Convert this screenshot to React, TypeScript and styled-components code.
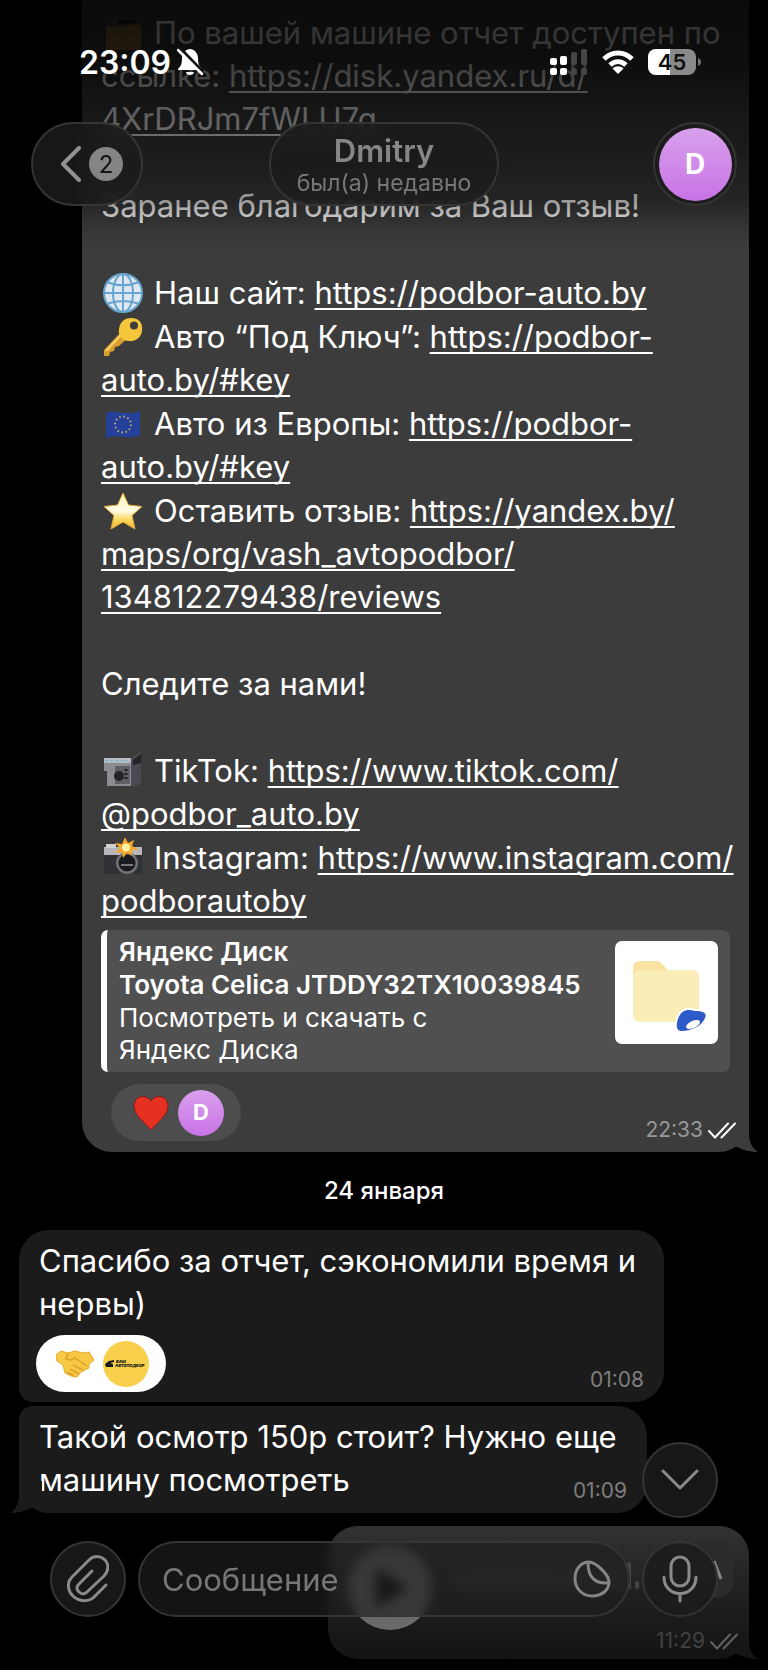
import React from 'react';
import styled, { createGlobalStyle, css } from 'styled-components';

const Global = createGlobalStyle`
  * { box-sizing: border-box; }
  html, body { margin: 0; background: #000; }
  body { font-family: Inter, "Noto Sans", "Liberation Sans", sans-serif; color: #fff; }
  button { font: inherit; color: inherit; padding: 0; border: 0; background: none; cursor: pointer; }
  svg { display: block; flex: none; }
`;

const Screen = styled.div`
  position: relative;
  overflow: hidden;
  background: #000;
`;

/* ---------- header ---------- */

const Header = styled.header`
  position: absolute;
  inset: 0 0 auto 0;
  z-index: 2;
  height: 250px;
  background: linear-gradient(
    rgba(0, 0, 0, 0.82) 0,
    rgba(0, 0, 0, 0.78) 60px,
    rgba(0, 0, 0, 0.64) 110px,
    rgba(0, 0, 0, 0.52) 160px,
    rgba(0, 0, 0, 0.4) 200px,
    rgba(0, 0, 0, 0.1) 230px,
    rgba(0, 0, 0, 0) 250px
  );
`;

const StatusBar = styled.div`
  display: flex;
  align-items: center;
  justify-content: space-between;
  height: 122px;
  padding: 2px 67px 0 79px;
`;

const StatusGroup = styled.div<{ $gap: number }>`
  display: flex;
  align-items: center;
  gap: ${(p) => p.$gap}px;
`;

const Clock = styled.time`
  font-size: 32px;
  font-weight: 600;
`;

const Nav = styled.nav`
  display: grid;
  grid-template-columns: 1fr auto 1fr;
  align-items: center;
  padding: 0 31px;
`;

const glass = css`
  border: 2px solid #343434;
  background: rgba(27, 27, 27, 0.84);
  backdrop-filter: blur(10px);
`;

const BackButton = styled.button`
  ${glass}
  display: flex;
  align-items: center;
  justify-self: start;
  gap: 8px;
  width: 112px;
  height: 84px;
  padding-left: 28px;
  border-radius: 42px;
`;

const Unread = styled.span`
  display: grid;
  place-items: center;
  width: 34px;
  height: 34px;
  border-radius: 50%;
  background: #858585;
  color: #111;
  font-size: 24px;
`;

const TitleButton = styled.button`
  ${glass}
  display: flex;
  flex-direction: column;
  align-items: center;
  width: 230px;
  height: 84px;
  padding-top: 7px;
  border-radius: 42px;
`;

const Name = styled.span`
  color: #868686;
  font-size: 31px;
  font-weight: 600;
  line-height: 40px;
`;

const Seen = styled.span`
  color: #777;
  font-size: 23px;
  line-height: 24px;
  white-space: nowrap;
`;

const AvatarButton = styled.button`
  ${glass}
  display: grid;
  place-items: center;
  justify-self: end;
  width: 84px;
  height: 84px;
  border-radius: 50%;
`;

const Avatar = styled.span<{ $size: number; $font: number }>`
  display: grid;
  place-items: center;
  width: ${(p) => p.$size}px;
  height: ${(p) => p.$size}px;
  border-radius: 50%;
  background: linear-gradient(#d8a0ec, #c873e6);
  color: #fff;
  font-size: ${(p) => p.$font}px;
  font-weight: 700;
`;

/* ---------- messages ---------- */

const Chat = styled.main`
  display: flex;
  flex-direction: column;
  padding: 0 19px 12px;
`;

const Bubble = styled.article<{ $out?: boolean }>`
  position: relative;
  align-self: ${(p) => (p.$out ? 'flex-end' : 'flex-start')};
  background: ${(p) => (p.$out ? '#3c3c3c' : '#1b1b1b')};
  font-size: 31px;
  line-height: 43px;
`;

const ReportBubble = styled(Bubble)`
  width: calc(100% - 63px);
  padding: 11px 19px 11px;
  border-radius: 0 0 30px 30px;
`;

const FirstBubble = styled(Bubble)`
  width: 645px;
  max-width: 100%;
  margin-bottom: 4px;
  padding: 9px 20px 10px;
  border-radius: 30px 30px 30px 14px;
`;

const SecondBubble = styled(Bubble)`
  width: 628px;
  max-width: 100%;
  margin-bottom: 13px;
  padding: 9px 20px 12px;
  border-radius: 14px 30px 30px 30px;
`;

const VoiceBubble = styled(Bubble)`
  display: flex;
  align-items: flex-start;
  width: 421px;
  height: 133px;
  padding: 15px 16px 0 20px;
  gap: 20px;
  border-radius: 30px;
  background: linear-gradient(#323232, #222 45%, #131313);
`;

const Tail = styled.svg<{ $left?: boolean }>`
  position: absolute;
  bottom: 0;
  ${(p) => (p.$left ? 'left: -9px; transform: scaleX(-1);' : 'right: -9px;')}
`;

const Sections = styled.div`
  display: flex;
  flex-direction: column;
  gap: 44px;
`;

const Section = styled.div`
  display: flex;
  flex-direction: column;
  gap: 1px;
`;

const Line = styled.p`
  margin: 0;
  white-space: nowrap;
`;

const Link = styled.a`
  color: inherit;
  text-decoration: underline;
  text-decoration-thickness: 2px;
  text-underline-offset: 4px;
  text-decoration-skip-ink: none;
`;

const EmojiSlot = styled.span`
  display: inline-block;
  width: 40px;
  height: 40px;
  margin: 0 11px 0 2px;
  vertical-align: -9px;
`;

const Preview = styled.a`
  display: flex;
  justify-content: space-between;
  margin-top: 8px;
  padding: 6px 12px 6px 12px;
  border-left: 6px solid #fff;
  border-radius: 7px;
  background: #505050;
  color: #fff;
  font-size: 26px;
  line-height: 32px;
  text-decoration: none;
`;

const PreviewText = styled.div`
  display: flex;
  flex-direction: column;
  gap: 1px;
  white-space: nowrap;
`;

const Strong = styled.strong`
  font-weight: 600;
`;

const Thumb = styled.span`
  width: 103px;
  height: 103px;
  margin-top: 5px;
  border-radius: 7px;
  background: #fff;
`;

const MetaRow = styled.footer`
  display: flex;
  align-items: flex-end;
  margin-top: 12px;
`;

const FirstMeta = styled(MetaRow)`
  margin-top: 10px;
`;

const Reaction = styled.button<{ $light?: boolean }>`
  display: flex;
  align-items: center;
  justify-content: flex-end;
  gap: 9px;
  width: 130px;
  height: 57px;
  margin-left: ${(p) => (p.$light ? -3 : 10)}px;
  padding-right: 17px;
  border-radius: 29px;
  background: ${(p) => (p.$light ? '#fff' : '#4d4d4d')};
`;

const Brand = styled.span`
  display: grid;
  place-items: center;
  width: 46px;
  height: 46px;
  border-radius: 50%;
  background: #f7cf4b;
`;

const Stamp = styled.span<{ $color: string }>`
  position: absolute;
  right: 20px;
  bottom: 9px;
  display: flex;
  align-items: center;
  gap: 5px;
  color: ${(p) => p.$color};
  font-size: 21px;
  line-height: 26px;
`;

const OutStamp = styled(Stamp)`
  right: 13px;
`;

const VoiceStamp = styled(Stamp)`
  right: 11px;
  bottom: 5px;
`;

const DateLabel = styled.div`
  padding: 24px 0 24px;
  text-align: center;
  font-size: 24px;
  font-weight: 500;
  line-height: 30px;
`;

const PlayButton = styled.button`
  display: grid;
  place-items: center;
  flex: none;
  margin-top: 5px;
  width: 84px;
  height: 84px;
  border-radius: 50%;
  background: #6a6a6a;
`;

const Transcribe = styled.button`
  display: grid;
  place-items: center end;
  flex: none;
  width: 60px;
  height: 57px;
  padding-right: 10px;
  margin-left: auto;
  border-radius: 16px;
  background: #2b2b2b;
`;

/* ---------- composer ---------- */

const Composer = styled.form`
  position: absolute;
  inset: auto 0 0 0;
  z-index: 2;
  display: flex;
  flex-wrap: wrap;
  justify-content: flex-end;
  gap: 23px 12px;
  padding: 0 50px 54px;
`;

const RoundButton = styled.button`
  ${glass}
  display: grid;
  place-items: center;
  flex: none;
  width: 76px;
  height: 76px;
  border-radius: 50%;
`;

const ComposerRow = styled.div`
  display: flex;
  gap: 12px;
  width: 100%;
`;

const Field = styled.div`
  ${glass}
  background: rgba(30, 30, 30, 0.66);
  backdrop-filter: blur(6px);
  display: flex;
  align-items: center;
  flex: 1;
  min-width: 0;
  height: 76px;
  padding: 0 17px 0 22px;
  border-radius: 38px;
`;

const Input = styled.input`
  flex: 1;
  min-width: 0;
  height: 44px;
  padding: 0;
  border: 0;
  outline: 0;
  background: none;
  color: #fff;
  font: inherit;
  font-size: 31px;
  &::placeholder { color: #777; opacity: 1; }
`;

/* ---------- drawings ---------- */

const BubbleTail = ({ id, left, from, to }: { id: string; left?: boolean; from: string; to: string }) => (
  <Tail $left={left} width="32" height="32" viewBox="0 0 32 32" aria-hidden="true">
    <defs>
      <linearGradient id={id} x1="0" y1="0" x2="0" y2="1">
        <stop offset="0" stopColor={from} />
        <stop offset="1" stopColor={to} />
      </linearGradient>
    </defs>
    <path d="M0 0H23V14C23 22 26 28 32 32C24 32 16 30 10 27L0 20Z" fill={`url(#${id})`} />
    <path d="M-8 32C0 32 6 30 10 26.500C16 30 24 32 32 32.500L-8 33Z" fill="#000" />
  </Tail>
);

const Checks = ({ color }: { color: string }) => (
  <svg width="28" height="17" viewBox="0 0 28 17" fill="none" stroke={color} strokeWidth="2" strokeLinecap="round" aria-hidden="true">
    <path d="M1 9L7 15.500L20 1.500M13.500 15.500L27 1.500" />
  </svg>
);

const emojis: Record<string, React.ReactNode> = {
  can: (
    <g opacity="0.9">
      <path d="M3 14L7 2H15L18 5H34L38 12V37H3Z" fill="#9a7433" />
      <path d="M3 14L7 2H15L18 5H34L38 12Z" fill="#4d4638" />
      <path d="M15 7H32V11H15Z" fill="#222" />
      <path d="M10 18L31 33M31 18L10 33" stroke="#80602b" strokeWidth="2" />
    </g>
  ),
  globe: (
    <g fill="none" stroke="#66a5cf" strokeWidth="2">
      <circle cx="20" cy="20" r="19" fill="#dfe8f0" />
      <ellipse cx="20" cy="20" rx="10" ry="19" />
      <path d="M20 1V39M1 20H39M5 9.500C14 13 26 13 35 9.500M5 30.500C14 27 26 27 35 30.500" />
    </g>
  ),
  key: (
    <g>
      <path d="M18 15L1 33V39H6L7 35L11 34L12 30L16 29L25 21Z" fill="#d99f2e" />
      <path d="M19 17L3 34" stroke="#f8d469" strokeWidth="2" />
      <path fillRule="evenodd" d="M28 1C37 1 40 7 39 14C38 21 32 25 25 24C18 23 15 18 16 12C17 5 21 1 28 1ZM31 4.500A4 4 0 1 0 31 12.500A4 4 0 1 0 31 4.500Z" fill="#f5c63c" />
    </g>
  ),
  eu: (
    <g>
      <path d="M3 9C13 5 24 13 37 7V31C25 37 15 29 3 34Z" fill="#24409a" />
      <circle cx="20" cy="20.500" r="8" fill="none" stroke="#b4ab68" strokeWidth="2" strokeDasharray="1.600 2.590" />
    </g>
  ),
  star: (
    <g>
      <defs>
        <linearGradient id="starFill" x1="0" y1="0" x2="0" y2="1">
          <stop offset="0" stopColor="#fff3b8" />
          <stop offset="0.5" stopColor="#fffbe6" />
          <stop offset="0.75" stopColor="#fbd65a" />
          <stop offset="1" stopColor="#f3b93a" />
        </linearGradient>
      </defs>
      <path d="M20 2L25.500 14L39 15.500L29 24.500L32 38L20 31L8 38L11 24.500L1 15.500L14.500 14Z" fill="url(#starFill)" stroke="#e3ab38" strokeLinejoin="round" />
    </g>
  ),
  video: (
    <g>
      <path d="M1 7H28V35H4V20H1Z" fill="#8b8d92" />
      <path d="M1 7H30V12H1Z" fill="#b4bac2" />
      <path d="M28 7L38 1V32L34 35H28Z" fill="#494b50" />
      <path d="M30 9L38 3V12L30 14Z" fill="#232427" />
      <path d="M12 15H27V33H12Z" fill="#5d5f63" />
      <circle cx="16" cy="25" r="5" fill="#242529" />
      <path d="M23 18V30" stroke="#222" strokeWidth="3" strokeDasharray="2 2" />
      <path d="M3 9.500H28" stroke="#61b4dc" strokeDasharray="2 3" />
    </g>
  ),
  flash: (
    <g>
      <path d="M1 9H39V36H1Z" fill="#303134" />
      <path d="M1 9H39V17H1Z" fill="#b7b7ba" />
      <path d="M3 6H13V10H3Z" fill="#cfcfcf" />
      <circle cx="24" cy="25" r="11" fill="#707277" />
      <circle cx="24" cy="25" r="8.500" fill="#1a1b1e" />
      <path d="M18 27H30" stroke="#777" strokeWidth="2" />
      <path d="M22 -1L25 5L31 2L29 8L35 11L28 13L30 18L24 15L20 20L19 14L12 15L17 10L12 5L19 6Z" fill="#f6a928" />
      <circle cx="23" cy="9.500" r="4" fill="#fff1a6" />
    </g>
  ),
};

const Emoji = ({ name, label }: { name: string; label: string }) => (
  <EmojiSlot>
    <svg width="40" height="40" viewBox="0 0 40 40" role="img" aria-label={label}>{emojis[name]}</svg>
  </EmojiSlot>
);

export default function App() {
  return (
    <Screen>
      <Global />

      <Header>
        <StatusBar>
          <StatusGroup $gap={6}>
            <Clock>23:09</Clock>
            <svg width="26" height="28" viewBox="0 0 26 28" aria-label="Без звука">
              <path d="M13 1C17 1 21 5 21 10C21 16 22 18 25 21V22H1V21C4 18 5 16 5 10C5 5 9 1 13 1ZM9 24H17C17 28 9 28 9 24Z" fill="#fff" />
              <path d="M3 0L26 24" stroke="#111" strokeWidth="3" />
              <path d="M1 2L25 26" stroke="#fff" strokeWidth="2.500" strokeLinecap="round" />
            </svg>
          </StatusGroup>
          <StatusGroup $gap={14}>
            <svg width="38" height="26" viewBox="0 0 38 26" aria-label="Сигнал">
              <g fill="#fff">
                <rect x="0" y="9" width="7" height="7" rx="2" /><rect x="0" y="19" width="7" height="7" rx="2" />
                <rect x="10" y="7" width="7" height="9" rx="2" /><rect x="10" y="19" width="7" height="7" rx="2" />
              </g>
              <g fill="#454545">
                <rect x="21" y="3" width="6" height="13" rx="2" /><rect x="21" y="19" width="6" height="7" rx="2" />
                <rect x="31" y="0" width="6" height="16" rx="2" /><rect x="31" y="19" width="6" height="7" rx="2" />
              </g>
            </svg>
            <svg width="32" height="24" viewBox="0 0 32 24" fill="none" stroke="#fff" strokeWidth="5" aria-label="Wi-Fi">
              <path d="M2 9C10 1 22 1 30 9" />
              <path d="M8 15C13 10.500 19 10.500 24 15" />
              <path d="M16 24L10.500 18.500C13.500 15.500 18.500 15.500 21.500 18.500Z" fill="#fff" stroke="none" />
            </svg>
            <svg width="53" height="26" viewBox="0 0 53 26" aria-label="Заряд 45%">
              <rect width="48" height="26" rx="8" fill="#8a8a8a" />
              <path d="M8 0H22V26H8A8 8 0 0 1 0 18V8A8 8 0 0 1 8 0Z" fill="#fff" />
              <path d="M50 9C54 11 54 15 50 17Z" fill="#777" />
              <text x="24" y="21" textAnchor="middle" fontSize="22" fontWeight="600" fill="#111">45</text>
            </svg>
          </StatusGroup>
        </StatusBar>
        <Nav>
          <BackButton aria-label="Назад">
            <svg width="20" height="36" viewBox="0 0 20 36" fill="none" stroke="#919191" strokeWidth="4" strokeLinecap="round" strokeLinejoin="round">
              <path d="M18 2L2 18L18 34" />
            </svg>
            <Unread>2</Unread>
          </BackButton>
          <TitleButton>
            <Name>Dmitry</Name>
            <Seen>был(а) недавно</Seen>
          </TitleButton>
          <AvatarButton aria-label="Профиль Dmitry">
            <Avatar $size={73} $font={28}>D</Avatar>
          </AvatarButton>
        </Nav>
      </Header>

      <Chat>
        <ReportBubble $out>
          <Sections>
            <Section>
              <Line>
                <Emoji name="can" label="Канистра" />По вашей машине отчет доступен по<br />
                ссылке: <Link href="https://disk.yandex.ru/d/4XrDRJm7fWLU7g">https://disk.yandex.ru/d/<br />4XrDRJm7fWLU7g</Link>
              </Line>
            </Section>
            <Section>
              <Line>Заранее благодарим за Ваш отзыв!</Line>
            </Section>
            <Section>
              <Line><Emoji name="globe" label="Глобус" />Наш сайт: <Link href="https://podbor-auto.by">https://podbor-auto.by</Link></Line>
              <Line><Emoji name="key" label="Ключ" />Авто “Под Ключ”: <Link href="https://podbor-auto.by/#key">https://podbor-<br />auto.by/#key</Link></Line>
              <Line><Emoji name="eu" label="Флаг ЕС" />Авто из Европы: <Link href="https://podbor-auto.by/#key">https://podbor-<br />auto.by/#key</Link></Line>
              <Line><Emoji name="star" label="Звезда" />Оставить отзыв: <Link href="https://yandex.by/maps/org/vash_avtopodbor/134812279438/reviews">https://yandex.by/<br />maps/org/vash_avtopodbor/<br />134812279438/reviews</Link></Line>
            </Section>
            <Section>
              <Line>Следите за нами!</Line>
            </Section>
            <Section>
              <Line><Emoji name="video" label="Видеокамера" />TikTok: <Link href="https://www.tiktok.com/@podbor_auto.by">https://www.tiktok.com/<br />@podbor_auto.by</Link></Line>
              <Line><Emoji name="flash" label="Фотоаппарат" />Instagram: <Link href="https://www.instagram.com/podborautoby">https://www.instagram.com/<br />podborautoby</Link></Line>
            </Section>
          </Sections>
          <Preview href="https://disk.yandex.ru/d/4XrDRJm7fWLU7g">
            <PreviewText>
              <Strong>Яндекс Диск</Strong>
              <Strong>Toyota Celica JTDDY32TX10039845</Strong>
              <span>Посмотреть и скачать с<br />Яндекс Диска</span>
            </PreviewText>
            <Thumb>
              <svg width="103" height="103" viewBox="0 0 103 103" aria-hidden="true">
                <path d="M18 32V27Q18 20 25 20H41Q45 20 48 24L53 29H77Q84 29 84 36V50H18Z" fill="#fae3a0" />
                <path d="M18 36Q19 29 26 29H77Q84 29 84 36V74Q84 81 77 81H25Q18 81 18 74Z" fill="#fbedb8" />
                <path d="M62 82C64 70 71 67 80 70C90 70 92 73 90 77C87 85 76 90 67 90C63 90 61 87 62 82Z" fill="#2e5ac8" stroke="#fff" strokeWidth="4" paintOrder="stroke" />
                <ellipse cx="78" cy="83.500" rx="7.500" ry="3.500" transform="rotate(-24 78 83.500)" fill="#fff" />
              </svg>
            </Thumb>
          </Preview>
          <MetaRow>
            <Reaction aria-label="Сердце, Dmitry">
              <svg width="36" height="36" viewBox="0 0 36 36" aria-hidden="true">
                <path d="M18 6C22-1 35 0 35 11C35 20 26 26 18 35C10 26 1 20 1 11C1 0 14-1 18 6Z" fill="#e53022" stroke="#7e1d18" strokeWidth="1" />
              </svg>
              <Avatar $size={46} $font={22}>D</Avatar>
            </Reaction>
          </MetaRow>
          <BubbleTail id="tailReport" from="#3c3c3c" to="#3c3c3c" />
          <OutStamp $color="#989898">22:33 <Checks color="#fff" /></OutStamp>
        </ReportBubble>

        <DateLabel>24 января</DateLabel>

        <FirstBubble>
          <Line>Спасибо за отчет, сэкономили время и<br />нервы)</Line>
          <FirstMeta>
            <Reaction $light aria-label="Рукопожатие, Ваш автоподбор">
              <svg width="38" height="28" viewBox="0 0 38 28" aria-hidden="true">
                <path d="M0 5L5 1L12 3L19 1L27 3L33 2L38 10L33 14V18L25 22L21 27L15 26L9 23L7 15L1 11Z" fill="#f6c844" stroke="#e6a92d" />
                <path d="M12 3L10 9L15 10L19 8L31 16M17 15L27 20M14 19L23 24M11 22L18 26" fill="none" stroke="#df9f2b" strokeWidth="1.500" />
              </svg>
              <Brand>
                <svg width="42" height="10" viewBox="0 0 42 10" aria-hidden="true">
                  <path d="M0 5L4 2L9 1V3L5 4L8 5V8H1Z" fill="#181818" />
                  <text x="11" y="4" fontSize="4" fontWeight="900" fontStyle="italic" fill="#181818">ВАШ</text>
                  <text x="10" y="8" fontSize="4" fontWeight="900" fontStyle="italic" fill="#181818">АВТОПОДБОР</text>
                </svg>
              </Brand>
            </Reaction>
          </FirstMeta>
          <Stamp $color="#7d7d7d">01:08</Stamp>
        </FirstBubble>

        <SecondBubble>
          <Line>Такой осмотр 150р стоит? Нужно еще<br />машину посмотреть</Line>
          <BubbleTail id="tailSecond" left from="#1b1b1b" to="#1b1b1b" />
          <Stamp $color="#7d7d7d">01:09</Stamp>
        </SecondBubble>

        <VoiceBubble $out>
          <PlayButton type="button" aria-label="Воспроизвести">
            <svg width="40" height="44" viewBox="0 0 40 44"><path d="M6 2L38 22L6 42Z" fill="#0c0c0c" /></svg>
          </PlayButton>
          <svg width="190" height="57" viewBox="0 0 190 57" stroke="#454545" strokeWidth="4" strokeLinecap="round" aria-hidden="true">
            <path d="M4 34V46M12 30V46M20 36V46M28 24V46M36 30V46M44 26V46M52 34V46M60 28V46M68 22V46M76 30V46M84 34V46M92 26V46M100 30V46M108 36V46M116 30V46M124 26V46M132 34V46M140 38V46M148 36V46M156 30V46M164 26V46M177 23V46M185 42V46" />
          </svg>
          <Transcribe type="button" aria-label="Расшифровать">
            <svg width="10" height="20" viewBox="0 0 10 20"><path d="M1 1L8 19" stroke="#888" strokeWidth="3" /></svg>
          </Transcribe>
          <BubbleTail id="tailVoice" from="#1a1a1a" to="#131313" />
          <VoiceStamp $color="#424242">11:29 <Checks color="#626262" /></VoiceStamp>
        </VoiceBubble>
      </Chat>

      <Composer onSubmit={(e) => e.preventDefault()}>
        <RoundButton type="button" aria-label="Вниз">
          <svg width="38" height="22" viewBox="0 0 38 22" fill="none" stroke="#8a8a8a" strokeWidth="3" strokeLinecap="round" strokeLinejoin="round">
            <path d="M2 2L19 19L36 2" />
          </svg>
        </RoundButton>
        <ComposerRow>
          <RoundButton type="button" aria-label="Прикрепить">
            <svg width="42" height="48" viewBox="0 0 42 48" fill="none" stroke="#8a8a8a" strokeWidth="3" strokeLinecap="round" strokeLinejoin="round">
              <path d="M39 30L27 42C22 47 12 47 6 41C0 35 0 27 5 22L22 5C27 0 34 1 38 5C42 9 42 16 37 21L20 37C17 40 14 39 12 37C9 34 10 31 12 29L25 16" />
            </svg>
          </RoundButton>
          <Field>
            <Input placeholder="Сообщение" aria-label="Сообщение" />
            <svg width="38" height="38" viewBox="0 0 38 38" fill="none" stroke="#858585" strokeWidth="3" strokeLinecap="round" strokeLinejoin="round" aria-hidden="true">
              <path d="M16 2C8 2 2 9 2 19C2 29 10 36 19 36C29 36 36 30 36 22C36 15 23 2 16 2ZM15 3C15 17 22 24 35 23" />
            </svg>
          </Field>
          <RoundButton type="button" aria-label="Голосовое сообщение">
            <svg width="36" height="48" viewBox="0 0 36 48" fill="none" stroke="#8a8a8a" strokeWidth="3" strokeLinecap="round">
              <rect x="9" y="2" width="18" height="29" rx="9" />
              <path d="M2 22C2 44 34 44 34 22M18 39V46" />
            </svg>
          </RoundButton>
        </ComposerRow>
      </Composer>
    </Screen>
  );
}
